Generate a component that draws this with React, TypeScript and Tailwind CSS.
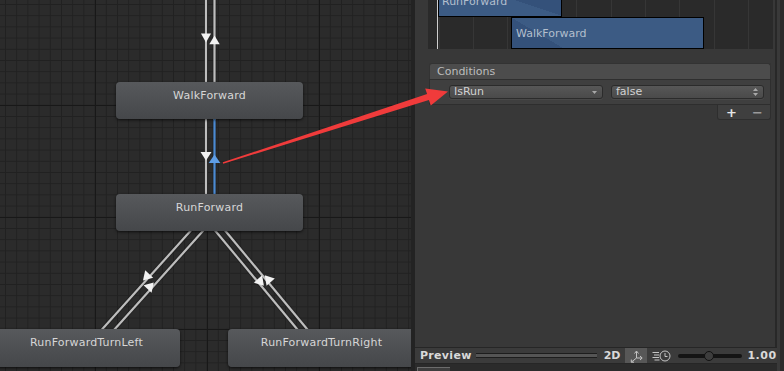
import React from "react";

type Pt = [number, number];

// triangle arrow head centred on (cx, cy) pointing along (dx, dy)
function arrowPoints(cx: number, cy: number, dx: number, dy: number, len = 9, half = 5.5) {
  const l = Math.hypot(dx, dy);
  const ux = dx / l;
  const uy = dy / l;
  const nx = -uy;
  const ny = ux;
  const tip: Pt = [cx + ux * len * 0.55, cy + uy * len * 0.55];
  const bx = cx - ux * len * 0.45;
  const by = cy - uy * len * 0.45;
  const a: Pt = [bx + nx * half, by + ny * half];
  const b: Pt = [bx - nx * half, by - ny * half];
  return [tip, a, b].map((p) => p.join(",")).join(" ");
}

const lineX = (x0: number, slope: number, y: number) => x0 + (329 - y) * slope;

function GraphCanvas() {
  return (
    <svg className="absolute inset-0" width="411" height="371">
      <defs>
        <pattern id="minor" width="11.2" height="11.2" patternUnits="userSpaceOnUse" x="5" y="4">
          <rect x="0" y="0" width="11.2" height="1" fill="#212121" />
          <rect x="0" y="0" width="1" height="11.2" fill="#212121" />
        </pattern>
        <pattern id="major" width="112" height="112" patternUnits="userSpaceOnUse" x="95" y="105">
          <rect x="0" y="0" width="112" height="1" fill="#181818" />
          <rect x="0" y="0" width="1" height="112" fill="#181818" />
        </pattern>
      </defs>
      <rect width="411" height="371" fill="#2b2b2b" />
      <rect width="411" height="371" fill="url(#minor)" />
      <rect width="411" height="371" fill="url(#major)" />

      {/* vertical transitions */}
      <g strokeWidth="2.2">
        <line x1="206" y1="0" x2="206" y2="200" stroke="#1c1c1c" strokeWidth="4" opacity="0.6" />
        <line x1="214.5" y1="0" x2="214.5" y2="200" stroke="#1c1c1c" strokeWidth="4" opacity="0.6" />
        <line x1="206" y1="0" x2="206" y2="200" stroke="#bdbdbd" />
        <line x1="214.5" y1="0" x2="214.5" y2="120" stroke="#bdbdbd" />
        <line x1="214.5" y1="119" x2="214.5" y2="200" stroke="#4b8ad3" />
      </g>
      <polygon points="201,33.5 211,33.5 206,42.5" fill="#f2f2f2" />
      <polygon points="209.3,44.3 219.7,44.3 214.5,35.5" fill="#f2f2f2" />
      <polygon points="200.5,152 211.5,152 206,160.5" fill="#f2f2f2" />
      <polygon points="208.7,163 220.3,163 214.5,154.5" fill="#5f9ee6" />

      {/* diagonal transitions */}
      <g strokeWidth="2.2">
        {[
          [97, 0.95],
          [109.5, 0.95],
          [302, -0.88],
          [312, -0.88],
        ].map(([x0, s], i) => (
          <g key={i}>
            <line x1={x0} y1={335} x2={lineX(x0, s, 225)} y2={225} stroke="#1c1c1c" strokeWidth="4" opacity="0.6" />
            <line x1={x0} y1={335} x2={lineX(x0, s, 225)} y2={225} stroke="#bdbdbd" />
          </g>
        ))}
      </g>
      <polygon points={arrowPoints(lineX(97, 0.95, 277), 277, -0.95, 1)} fill="#f2f2f2" />
      <polygon points={arrowPoints(lineX(109.5, 0.95, 286), 286, 0.95, -1)} fill="#f2f2f2" />
      <polygon points={arrowPoints(lineX(302, -0.88, 282), 282, 0.88, 1)} fill="#f2f2f2" />
      <polygon points={arrowPoints(lineX(312, -0.88, 279), 279, -0.88, -1)} fill="#f2f2f2" />
    </svg>
  );
}

function StateNode({ label, className }: { label: string; className: string }) {
  return (
    <div
      className={
        "absolute flex w-[187px] justify-center rounded-[4px] bg-[linear-gradient(#57595c,#45474a)] pt-[7px] text-[11px] leading-[14px] tracking-[0.2px] text-[#d6d6d6] shadow-[0_1px_3px_rgba(0,0,0,0.7)] " +
        className
      }
    >
      {label}
    </div>
  );
}

function Graph() {
  return (
    <div className="relative h-full w-[411px] flex-none overflow-hidden">
      <GraphCanvas />
      <StateNode label="WalkForward" className="left-[116px] top-[82px] h-[37px]" />
      <StateNode label="RunForward" className="left-[116px] top-[194px] h-[37px]" />
      <StateNode label="RunForwardTurnLeft" className="left-[-7px] top-[329px] h-[38px]" />
      <StateNode label="RunForwardTurnRight" className="left-[228px] top-[329px] h-[38px]" />
    </div>
  );
}

function Timeline() {
  return (
    <div className="relative ml-[13px] h-[49px] w-[345px] overflow-hidden bg-[#2a2a2a]">
      <div className="absolute inset-0 flex pl-[10.6px]">
        {Array.from({ length: 10 }).map((_, i) => (
          <div key={i} className="h-full w-[34.4px] flex-none border-l border-[#363636]" />
        ))}
      </div>
      <div className="absolute top-0 bottom-0 left-[9px] w-px bg-[#cfcfcf]" />
      <div className="absolute top-[-1px] left-[10px] flex h-[18px] w-[124px] overflow-hidden border border-t-0 border-black bg-[#3c5b84]">
        <div className="absolute top-0 left-[72px] h-full w-[52px] bg-[linear-gradient(to_top_right,#3c5b84_50%,#34517a_50%)]" />
        <span className="relative mt-[-4px] pl-[3px] leading-[14px] text-[#b3bfcd]">RunForward</span>
      </div>
      <div className="absolute top-[17px] left-[83px] h-[32px] w-[193px] overflow-hidden border border-black bg-[#3c5b84]">
        <div className="absolute top-0 left-0 h-full w-[51px] bg-[linear-gradient(to_top_right,#34517a_50%,#3c5b84_50%)]" />
        <span className="relative block pt-[9px] pl-[4px] leading-[14px] text-[#b3bfcd]">WalkForward</span>
      </div>
    </div>
  );
}

function Dropdown({ label, width, updown }: { label: string; width: string; updown?: boolean }) {
  return (
    <div
      className={
        "flex h-[14px] items-center justify-between rounded-[3px] border border-[#2b2b2b] bg-[linear-gradient(#575757,#4a4a4a)] pr-[5px] pl-[4px] text-[11px] leading-[12px] text-[#d2d2d2] shadow-[0_1px_0_rgba(255,255,255,0.05)] " +
        width
      }
    >
      <span>{label}</span>
      {updown ? (
        <svg width="5" height="8" viewBox="0 0 5 8">
          <path d="M2.5 0 L5 3 H0 Z M0 5 H5 L2.5 8 Z" fill="#a8a8a8" />
        </svg>
      ) : (
        <svg width="5" height="3" viewBox="0 0 5 3">
          <path d="M0 0 H5 L2.5 3 Z" fill="#a8a8a8" />
        </svg>
      )}
    </div>
  );
}

function Conditions() {
  return (
    <div className="mt-[14px] ml-[14px] flex w-[342px] flex-col">
      <div className="h-[16px] rounded-t-[3px] border border-b-0 border-[#333] bg-[#4c4c4c] pl-[7px] text-[11px] leading-[15px] text-[#bcbcbc]">
        Conditions
      </div>
      <div className="flex h-[26px] items-center border border-t-[#2f2f2f] border-[#2e2e2e] bg-[#3f3f3f]">
        <div className="ml-[3px] h-[2px] w-[10px] bg-[#1c1c1c]" />
        <div className="ml-[6px]">
          <Dropdown label="IsRun" width="w-[154px]" />
        </div>
        <div className="ml-[8px]">
          <Dropdown label="false" width="w-[153px]" updown />
        </div>
      </div>
      <div className="flex h-[15px] w-[54px] items-center gap-[15px] self-end rounded-b-[3px] border border-t-0 border-[#2e2e2e] bg-[#3f3f3f] pl-[8px] text-[13px] leading-[13px] font-bold">
        <span className="text-[#e6e6e6]">+</span>
        <span className="text-[#9a9a9a]">−</span>
      </div>
    </div>
  );
}

function AxisIcon() {
  return (
    <svg width="14" height="14" viewBox="0 0 14 14" fill="none" stroke="#c4c4c4" strokeWidth="1">
      <path d="M7.5 9 V2.5 M5.5 4.5 L7.5 2 L9.5 4.5" />
      <path d="M7.5 9 H13 M11 7 L13.2 9 L11 11" />
      <path d="M7.5 9 L2.5 13 M2.3 10.5 L2.3 13.2 L5 13.2" />
    </svg>
  );
}

function SpeedIcon() {
  return (
    <svg width="19" height="12" viewBox="0 0 19 12" fill="none" stroke="#c4c4c4" strokeWidth="1">
      <path d="M0.5 2.5 H7 M2 5 H7 M0.5 7.5 H7 M2.5 10 H7.5" />
      <circle cx="13" cy="6" r="5" />
      <path d="M13 3 V6.5 H15.5" />
    </svg>
  );
}

function PreviewBar() {
  return (
    <div className="flex flex-col">
      <div className="flex h-[17px] items-center border-y border-[#262626] bg-[#3b3b3b] text-[11px] leading-[15px] font-bold tracking-[0.3px] text-[#d9d9d9]">
        <span className="pl-[5px]">Preview</span>
        <div className="ml-[4px] h-[5px] w-[121px] flex-none border-y border-[#1d1d1d] bg-[#555]" />
        <span className="ml-[7px] tracking-normal">2D</span>
        <div className="ml-[5px] flex h-full w-[22px] flex-none items-center justify-center bg-[#575757]">
          <AxisIcon />
        </div>
        <div className="ml-[5px] flex items-center">
          <SpeedIcon />
        </div>
        <div className="relative ml-[7px] h-[4px] w-[64px] flex-none rounded-full bg-[#141414]">
          <div className="absolute top-[-3px] left-[26px] h-[10px] w-[10px] rounded-full border border-[#111] bg-[#3d3d3d]" />
        </div>
        <span className="ml-[5px] tracking-[0.5px]">1.00</span>
      </div>
      <div className="h-[7px] bg-[#2b2b2b] pl-[2px] pt-[3px]">
        <div className="h-[4px] w-[33px] border-t border-l border-[#6c6c6c] bg-[#3e3e3e]" />
      </div>
    </div>
  );
}

function Inspector() {
  return (
    <div className="flex h-full w-[362px] flex-none flex-col bg-[#383838]">
      <div className="flex flex-1 flex-col border-r-2 border-[#282828]">
        <Timeline />
        <Conditions />
      </div>
      <PreviewBar />
    </div>
  );
}

function RedArrow() {
  return (
    <svg className="pointer-events-none absolute inset-0" width="784" height="371">
      <polygon
        points="222.8,162.3 427.1,94.1 425.2,88.4 448,91.5 430.8,105.6 428.9,99.9 223.2,163.8"
        fill="#f03b3b"
      />
    </svg>
  );
}

export default function App() {
  return (
    <div className="relative flex h-[371px] w-[784px] overflow-hidden bg-[#383838] font-['DejaVu_Sans',sans-serif] text-[11px]">
      <Graph />
      <div className="h-full w-[4px] flex-none bg-[#232323]" />
      <Inspector />
      <div className="flex h-full flex-1">
        <div className="w-[3px] bg-[#393939]" />
        <div className="flex-1 bg-[#2c2c2c]" />
      </div>
      <RedArrow />
    </div>
  );
}
